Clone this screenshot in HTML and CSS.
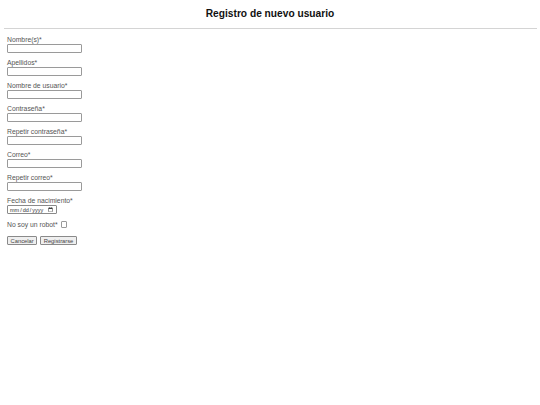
FILE: index.html
```html
<!DOCTYPE html>
<html lang="es">
<head>
<meta charset="utf-8">
<title>Registro de nuevo usuario</title>
<link rel="stylesheet" href="styles.css">
</head>
<body>
<header class="page-header">
  <h1 class="title">Registro de nuevo usuario</h1>
</header>
<hr class="divider">
<form class="register-form">
  <div class="field">
    <label class="field-label" for="nombre">Nombre(s)*</label>
    <input class="text-input" type="text" id="nombre">
  </div>
  <div class="field">
    <label class="field-label" for="apellidos">Apellidos*</label>
    <input class="text-input" type="text" id="apellidos">
  </div>
  <div class="field">
    <label class="field-label" for="usuario">Nombre de usuario*</label>
    <input class="text-input" type="text" id="usuario">
  </div>
  <div class="field">
    <label class="field-label" for="pass">Contraseña*</label>
    <input class="text-input" type="password" id="pass">
  </div>
  <div class="field">
    <label class="field-label" for="pass2">Repetir contraseña*</label>
    <input class="text-input" type="password" id="pass2">
  </div>
  <div class="field">
    <label class="field-label" for="correo">Correo*</label>
    <input class="text-input" type="email" id="correo">
  </div>
  <div class="field">
    <label class="field-label" for="correo2">Repetir correo*</label>
    <input class="text-input" type="email" id="correo2">
  </div>
  <div class="field">
    <label class="field-label" for="fecha">Fecha de nacimiento*</label>
    <input class="date-input" type="date" id="fecha">
  </div>
  <div class="check-row">
    <label class="check-label" for="robot">No soy un robot*</label>
    <input class="check-input" type="checkbox" id="robot">
  </div>
  <div class="actions">
    <button class="btn" type="button">Cancelar</button>
    <button class="btn" type="submit">Registrarse</button>
  </div>
</form>
</body>
</html>
```
FILE: styles.css
```css
html {
  background: #ffffff;
}

body {
  margin: 0 3.5px;
  font-family: "Liberation Sans", Arial, sans-serif;
  color: #333333;
}

.page-header {
  padding-top: 8px;
}

.title {
  margin: 0;
  font-size: 10.2px;
  line-height: 12px;
  font-weight: bold;
  text-align: center;
  color: #111111;
}

.divider {
  margin: 7.5px 0 0;
  border: 0;
  border-top: 1px solid #d4d4d4;
  height: 0;
}

.register-form {
  padding: 7.5px 3.5px 0;
}

.field {
  display: flex;
  flex-direction: column;
  align-items: flex-start;
  margin-bottom: 6.5px;
}

.field-label {
  font-size: 6.8px;
  line-height: 8px;
  color: #555555;
}

.text-input {
  width: 75px;
  height: 8.5px;
  box-sizing: border-box;
  margin: 0;
  padding: 0 1px;
  border: 0.5px solid #9a9a9a;
  border-radius: 1px;
  font-size: 5.5px;
}

.date-input {
  width: 50px;
  height: 9px;
  box-sizing: border-box;
  margin: 0;
  padding: 0 1px;
  border: 0.5px solid #8a8a8a;
  border-radius: 1px;
  font-family: "Liberation Sans", Arial, sans-serif;
  font-size: 5.5px;
  line-height: 8px;
  color: #333333;
}

.check-row {
  display: flex;
  align-items: center;
  gap: 3px;
  margin: 3.5px 0 7px;
}

.check-label {
  font-size: 6.8px;
  line-height: 8px;
  color: #555555;
}

.check-input {
  appearance: none;
  -webkit-appearance: none;
  box-sizing: border-box;
  width: 6.5px;
  height: 6.5px;
  margin: 0;
  border: 0.5px solid #9a9a9a;
  border-radius: 1px;
  background: #ffffff;
}

.actions {
  display: flex;
  gap: 3px;
}

.btn {
  margin: 0;
  padding: 0 2.5px;
  height: 9.5px;
  font-family: "Liberation Sans", Arial, sans-serif;
  font-size: 5.8px;
  line-height: 8px;
  color: #444444;
  background: #efefef;
  border: 0.5px solid #8a8a8a;
  border-radius: 1px;
}
```
